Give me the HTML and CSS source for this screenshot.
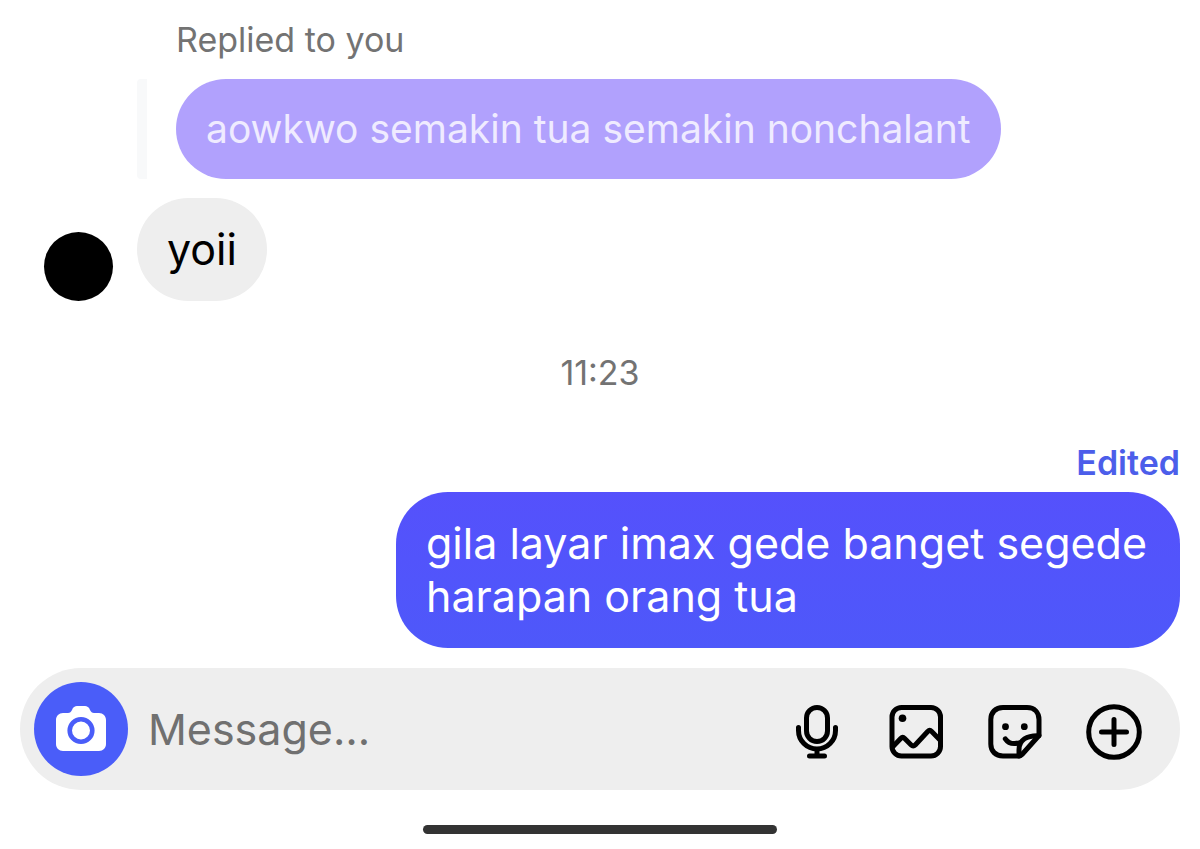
FILE: index.html
```
<!DOCTYPE html>
<html lang="id">
<head>
    <meta charset="UTF-8">
    <title>Chat</title>
    <meta name="viewport" content="width=device-width, initial-scale=1.0">
    <link rel="stylesheet" href="styles.css">
</head>
<body>
    <main class="chat">
        <p class="reply-label">Replied to you</p>
        <div class="quote">
            <p class="bubble bubble-quoted">aowkwo semakin tua semakin nonchalant</p>
        </div>
        <div class="row">
            <div class="avatar"></div>
            <p class="bubble bubble-received">yoii</p>
        </div>
        <time class="timestamp">11:23</time>
        <span class="edited">Edited</span>
        <p class="bubble bubble-sent">gila layar imax gede banget segede harapan orang tua</p>
    </main>

    <form class="composer">
        <button class="camera" type="button" aria-label="Camera">
            <svg width="52" height="46" viewBox="0 0 52 46">
                <path fill="#fff" d="M8 7h5c2 0 3-1 4-3 1-3 3-4 5-4h8c2 0 4 1 5 4 1 2 2 3 4 3h5c4 0 7 3 7 7v24c0 4-3 7-7 7H8c-4 0-7-3-7-7V14c0-4 3-7 7-7z"/>
                <circle cx="26" cy="24.5" r="11.3" fill="none" stroke="#4a5df9" stroke-width="4.6"/>
            </svg>
        </button>
        <input class="message" type="text" placeholder="Message…" aria-label="Message">
        <div class="actions">
            <button type="button" aria-label="Voice message">
                <svg class="icon" viewBox="0 0 56 56">
                    <rect x="17.5" y="3.5" width="21" height="34" rx="10.5"/>
                    <path d="M9.5 23.5v3a18.5 18.5 0 0 0 37 0v-3M28 45v7M20.5 52h15"/>
                </svg>
            </button>
            <button type="button" aria-label="Photo">
                <svg class="icon" viewBox="0 0 56 56">
                    <rect x="4" y="3.5" width="48.5" height="48.5" rx="9.5"/>
                    <path d="M5 42.5L12.7 34.5q2-2 4 0l6.500 6.500q2 2 4 0L39.700 27.500q2-2 4 0L52 36"/>
                    <circle class="dot" cx="14.5" cy="14.2" r="3.800"/>
                </svg>
            </button>
            <button type="button" aria-label="Sticker">
                <svg class="icon" viewBox="0 0 56 56">
                    <path d="M32 52H16C8.5 52 3.8 47 3.8 40V15.5c0-7 4.7-12 12.2-12h24c7.5 0 12 5 12 12V31.5L35 50.5c-1 1-1.800 1.500-3 1.500z"/>
                    <path d="M52 31.7c-12-.5-20 4-20 14V52"/>
                    <path d="M18.3 34.8c3 4.500 8 5.700 14 4"/>
                    <circle class="dot" cx="18.5" cy="22.7" r="3.4"/>
                    <circle class="dot" cx="37.3" cy="22.7" r="3.4"/>
                </svg>
            </button>
            <button type="button" aria-label="More">
                <svg class="icon" viewBox="0 0 56 56">
                    <circle cx="28" cy="28" r="25.3"/>
                    <path d="M28 15.500v25M15.500 28h25"/>
                </svg>
            </button>
        </div>
    </form>
    <div class="home-bar"></div>
</body>
</html>
```

FILE: styles.css
```
* {
    box-sizing: border-box;
}
body {
    margin: 0;
    background-color: #fff;
    color: #000;
    font-family: Inter, "Liberation Sans", sans-serif;
}
p {
    margin: 0;
}
button {
    padding: 0;
    border: none;
    background: none;
    cursor: pointer;
}
svg {
    display: block;
}
.chat {
    display: flex;
    flex-direction: column;
    padding: 20px 20px 0;
}
.reply-label {
    padding-left: 156px;
    font-size: 34px;
    line-height: 40px;
    color: #737373;
}
.quote {
    display: flex;
    margin: 19px 0 19px 117px;
    padding-left: 29px;
    border-left: 10px solid #f8f9fa;
    border-radius: 4px;
}
.bubble {
    padding: 25px 30px;
    border-radius: 52px;
    font-size: 43px;
    line-height: 53px;
}
.bubble-quoted {
    font-size: 39px;
    line-height: 50px;
    background-color: #b1a1fd;
    color: #efebff;
}
.row {
    display: flex;
    align-items: flex-end;
    gap: 24px;
    padding-left: 24px;
}
.avatar {
    width: 69px;
    height: 69px;
    border-radius: 50%;
    background-color: #000;
}
.bubble-received {
    background-color: #eee;
}
.timestamp {
    margin-top: 52px;
    text-align: center;
    font-size: 34px;
    line-height: 40px;
    color: #737373;
}
.edited {
    margin: 50px 0 9px;
    text-align: right;
    font-size: 34px;
    font-weight: 600;
    line-height: 40px;
    color: #4c5eea;
}
.bubble-sent {
    align-self: flex-end;
    max-width: 784px;
    background: linear-gradient(#5551fc, #4e58fa);
    color: #fff;
}
.composer {
    display: flex;
    align-items: center;
    height: 122px;
    margin: 20px 20px 0;
    padding: 0 38px 0 14px;
    border-radius: 61px;
    background-color: #eee;
}
.camera {
    display: flex;
    align-items: center;
    justify-content: center;
    width: 94px;
    height: 94px;
    border-radius: 50%;
    background-color: #4a5df9;
}
.message {
    flex: 1;
    min-width: 0;
    padding: 0 20px;
    border: none;
    outline: none;
    background: none;
    font-family: inherit;
    font-size: 43px;
    line-height: 53px;
}
.message::placeholder {
    color: #707070;
    opacity: 1;
}
.actions {
    display: flex;
    gap: 43px;
    padding-top: 6px;
}
.icon {
    width: 56px;
    height: 56px;
    fill: none;
    stroke: #000;
    stroke-width: 5;
    stroke-linecap: round;
    stroke-linejoin: round;
}
.icon .dot {
    fill: #000;
    stroke: none;
}
.home-bar {
    width: 354px;
    height: 9px;
    margin: 35px auto 0;
    border-radius: 5px;
    background-color: #333;
}
```
